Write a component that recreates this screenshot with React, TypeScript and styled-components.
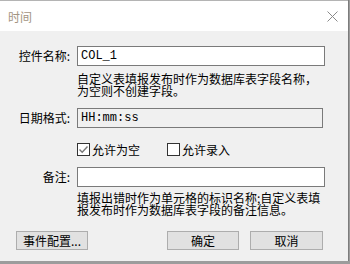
import React from "react";
import styled, { createGlobalStyle } from "styled-components";

const GlobalStyle = createGlobalStyle`
  html, body {
    margin: 0;
    padding: 0;
    background: #9c9c9c;
  }
  body {
    width: 350px;
    height: 264px;
    overflow: hidden;
    font-family: "Noto Sans CJK SC", "Liberation Sans", sans-serif;
    font-size: 12px;
  }
`;

const App = () => {
  return (
    <>
      <GlobalStyle />
      <Dialog>
        <TitleBar>
          <Title>时间</Title>
          <CloseIcon viewBox="0 0 11 11">
            <path d="M0.5 0.5 L10.5 10.5 M10.5 0.5 L0.5 10.5" stroke="#8a8a8a" strokeWidth="1" />
          </CloseIcon>
        </TitleBar>
        <Body>
          <Row top={15}>
            <Label>控件名称:</Label>
            <Input width={248} value="COL_1" readOnly />
          </Row>
          <Hint top={7}>
            <span>自定义表填报发布时作为数据库表字段名称，</span>
            <span>为空则不创建字段。</span>
          </Hint>
          <Row top={11}>
            <Label>日期格式:</Label>
            <Input width={246} value="HH:mm:ss" readOnly disabledLook />
          </Row>
          <Checks>
            <Check>
              <Box>
                <svg width="11" height="11" viewBox="0 0 11 11">
                  <path d="M1.5 5.5 L4.2 8.2 L9.5 2.5" stroke="#777" strokeWidth="1.4" fill="none" />
                </svg>
              </Box>
              允许为空
            </Check>
            <Check>
              <Box />
              允许录入
            </Check>
          </Checks>
          <Row top={11}>
            <Label>备注:</Label>
            <Input width={248} value="" readOnly />
          </Row>
          <Hint top={5}>
            <span>填报出错时作为单元格的标识名称;自定义表填</span>
            <span>报发布时作为数据库表字段的备注信息。</span>
          </Hint>
          <Footer>
            <Button width={72}>事件配置...</Button>
            <Spacer />
            <Button width={72}>确定</Button>
            <Button width={73}>取消</Button>
          </Footer>
        </Body>
      </Dialog>
    </>
  );
};

export default App;

const Dialog = styled.div`
  width: 348px;
  height: 261px;
  border-right: 1px solid #7c7c7c;
  background: #f0f0f0;
  display: flex;
  flex-direction: column;
`;

const TitleBar = styled.div`
  height: 30px;
  background: #ffffff;
  border-top: 1px solid #b4b4b4;
  display: flex;
  align-items: center;
  padding: 0 10px 0 8px;
`;

const Title = styled.div`
  flex: 1;
  color: #a39482;
  font-size: 12px;
`;

const CloseIcon = styled.svg`
  width: 11px;
  height: 11px;
`;

const Body = styled.div`
  display: flex;
  flex-direction: column;
`;

const Row = styled.div<{ top: number }>`
  display: flex;
  align-items: center;
  margin-top: ${(p) => p.top}px;
  gap: 7px;
`;

const Label = styled.div`
  width: 70px;
  text-align: right;
  color: #000;
  font-size: 12px;
  line-height: 20px;
`;

const Input = styled.input<{ width: number; disabledLook?: boolean }>`
  box-sizing: border-box;
  width: ${(p) => p.width}px;
  height: 20px;
  margin: 0;
  padding: 0 3px;
  border: 1px solid #7a7a7a;
  background: ${(p) => (p.disabledLook ? "#f0f0f0" : "#ffffff")};
  font-family: "Liberation Mono", "DejaVu Sans Mono", monospace;
  font-size: 12px;
  color: #000;
  outline: none;
`;

const Hint = styled.div<{ top: number }>`
  display: flex;
  flex-direction: column;
  margin: ${(p) => p.top}px 0 0 77px;
  font-size: 12px;
  line-height: 12px;
  color: #000;
  white-space: nowrap;
`;

const Checks = styled.div`
  display: flex;
  margin: 15px 0 0 77px;
  gap: 27px;
`;

const Check = styled.label`
  display: flex;
  align-items: center;
  gap: 2px;
  font-size: 12px;
  line-height: 13px;
  color: #000;
`;

const Box = styled.span`
  box-sizing: border-box;
  width: 13px;
  height: 13px;
  border: 1px solid #333;
  background: #fff;
  display: flex;
  align-items: center;
  justify-content: center;
`;

const Footer = styled.div`
  display: flex;
  margin-top: 15px;
  padding: 0 25px 0 16px;
  gap: 11px;
`;

const Spacer = styled.div`
  flex: 1;
`;

const Button = styled.button<{ width: number }>`
  box-sizing: border-box;
  width: ${(p) => p.width}px;
  height: 19px;
  padding: 0;
  border: 1px solid #adadad;
  background: #e1e1e1;
  font-family: "Noto Sans CJK SC", "Liberation Sans", sans-serif;
  font-size: 12px;
  line-height: 17px;
  color: #000;
`;
